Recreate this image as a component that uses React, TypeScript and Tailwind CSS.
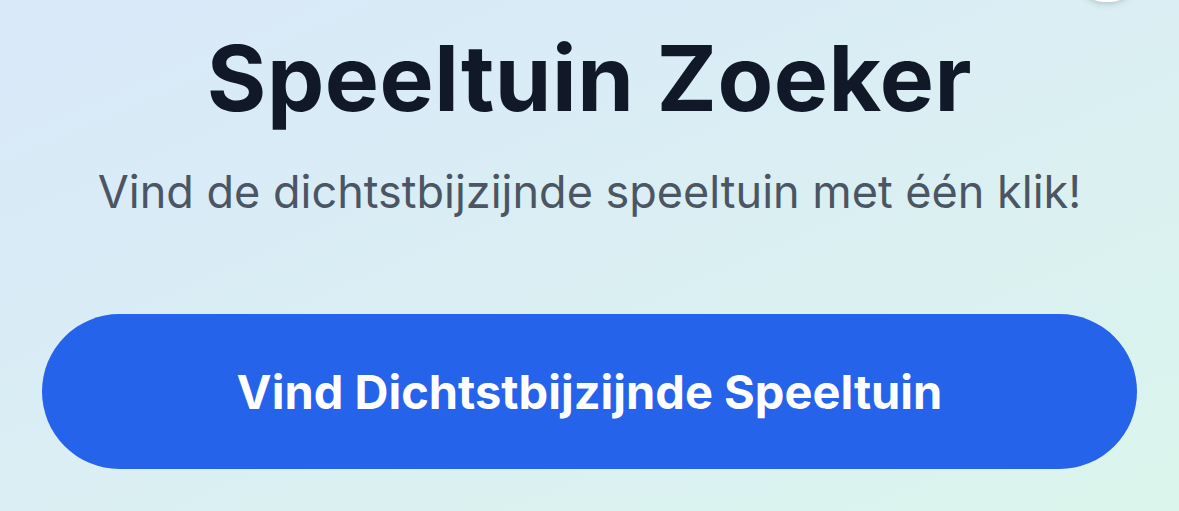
import React from 'react';

export default function App() {
  return (
    <div
      className="relative min-h-screen h-[511px] overflow-hidden bg-gradient-to-br from-[#d9e8fa] to-[#dbf5ec]"
      style={{ fontFamily: 'Inter, "Noto Sans", sans-serif' }}
    >
      {/* clipped control peeking in from above */}
      <div className="absolute -top-[52px] right-[42px] w-[60px] h-[54px] rounded-full bg-white shadow-md" />

      <div className="flex flex-col items-center px-[42px] pt-[33px]">
        <h1 className="text-[91px] leading-none font-bold tracking-[0.006em] text-[#111827]">
          Speeltuin Zoeker
        </h1>
        <p className="mt-[45px] text-[45px] leading-none text-[#4b5563]">
          Vind de dichtstbijzijnde speeltuin met één klik!
        </p>
        <button className="mt-[100px] w-full h-[155px] rounded-full bg-[#2563eb] text-white text-[47px] leading-none font-bold">
          Vind Dichtstbijzijnde Speeltuin
        </button>
      </div>
    </div>
  );
}
